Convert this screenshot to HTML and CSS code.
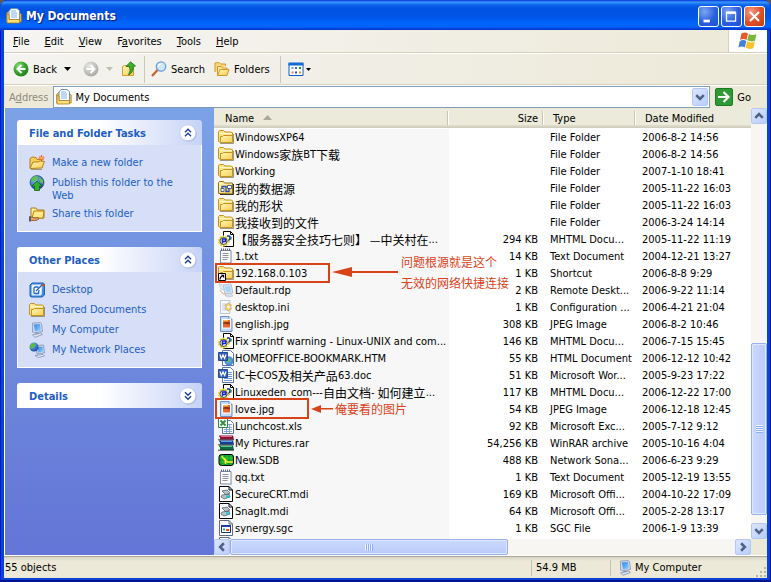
FILE: index.html
```html
<!DOCTYPE html>
<html lang="en">
<head>
<meta charset="utf-8">
<title>My Documents</title>
<link rel="stylesheet" href="styles.css">
</head>
<body>
<svg class="defs" aria-hidden="true">
  <defs>
    <linearGradient id="gFolder" x1="0" y1="0" x2="1" y2="1"><stop offset="0" stop-color="#fffab8"/><stop offset="1" stop-color="#f7ca50"/></linearGradient>
    <linearGradient id="gScreen" x1="0" y1="0" x2="1" y2="1"><stop offset="0" stop-color="#2f7fe0"/><stop offset="1" stop-color="#9ad8ff"/></linearGradient>
    <radialGradient id="gGreen" cx=".35" cy=".3" r=".8"><stop offset="0" stop-color="#8fdc7d"/><stop offset=".5" stop-color="#3aa62c"/><stop offset="1" stop-color="#1c7d18"/></radialGradient>
    <radialGradient id="gGray" cx=".35" cy=".3" r=".8"><stop offset="0" stop-color="#e6e6e2"/><stop offset="1" stop-color="#a5a5a0"/></radialGradient>
    <radialGradient id="gGlobe" cx=".35" cy=".3" r=".8"><stop offset="0" stop-color="#7db8ff"/><stop offset="1" stop-color="#123f9c"/></radialGradient>
  </defs>
  <symbol id="folder" viewBox="0 0 16 16">
    <path d="M2 14.500h13.500V5" fill="none" stroke="#77705c" opacity=".7"/>
    <path d="M.5 12.500V2.500L1.500 1.500h4l1.500 1.500H13.500l1 1v9h-13z" fill="#fbe48a" stroke="#c6941c"/>
    <path d="M1.500 4.500h12" stroke="#fff8cc"/>
    <path d="M2.500 13.500V7.500h2l1-1h9v7z" fill="url(#gFolder)" stroke="#c6941c"/>
  </symbol>
  <symbol id="openfolder" viewBox="0 0 16 16">
    <path d="M1 13V3.500L3 2l4 .5 1 2 5-.5v3" fill="#f5cf5a" stroke="#b98014"/>
    <path d="M1 13.500L4 7h5l2-1 4.500.5L13 13z" fill="url(#gFolder)" stroke="#b98014"/>
    <path d="M2 14.500h11" stroke="#7d6a3a" opacity=".6"/>
  </symbol>
  <symbol id="newfolder" viewBox="0 0 16 16">
    <use href="#openfolder"/>
    <path d="M12.500 0v6M9.500 3h6M10.500 1l4 4M14.500 1l-4 4" stroke="#ee5a24"/><circle cx="12.500" cy="3" r="1.300" fill="#ffb347"/>
  </symbol>
  <symbol id="sharefolder" viewBox="0 0 16 16">
    <path d="M2 11V2h5l1.500 2H15v8H2z" fill="url(#gFolder)" stroke="#a97a17"/>
    <path d="M5 5h10l-1 7H3z" fill="#ffe98a" stroke="#b98014"/>
    <path d="M0 11h3l3 1 3-.5 1 1.500-3 1.500H0z" fill="#e9a368" stroke="#7a4416" stroke-width=".7"/><path d="M0 10.500h2v5H0z" fill="#4d5a78"/>
  </symbol>
  <symbol id="publish" viewBox="0 0 16 16">
    <circle cx="8" cy="7.500" r="7" fill="url(#gGlobe)" stroke="#1d3c7c" stroke-width=".6"/>
    <path d="M3 3l3-2 3 .5-1 3-3 2H2zM10 2l4 3v4l-3-2z" fill="#5fc448"/>
    <path d="M8 6l5 5h-2.500v4.500h-5V11H3z" fill="#35b02a" stroke="#0b6a10" stroke-width=".8"/>
  </symbol>
  <symbol id="deskicon" viewBox="0 0 16 16">
    <path d="M1 3l2-2h11l1.500 1v11L13 15H2l-1-1z" fill="#3d8fe4" stroke="#2460b4"/>
    <path d="M3 3h9l1 1-1 9H3z" fill="#fff" stroke="#d6e8fb"/>
    <path d="M9.500 5H6L5 6v5l1 .5h3.500L10 8M7 9l6-6" fill="none" stroke="#1f66c2" stroke-width="1.300"/><path d="M13 4l2.500-1.500" stroke="#e34a2a" stroke-width="2"/>
  </symbol>
  <symbol id="computer" viewBox="0 0 16 16">
    <path d="M3.500 1l8-.5 1 1 1 8-8 1.500-2-1z" fill="#c9d6ea" stroke="#8497b8" stroke-width=".8"/>
    <path d="M5 2.500l6-.5.8 6.500-5.800 1z" fill="url(#gScreen)"/>
    <path d="M6 11l3-.5.5 1.500-3 .5z" fill="#8fa3c3"/>
    <path d="M3.500 13l8.500-2 1.500 1.500L6 15.300z" fill="#dde6f2" stroke="#7287a8" stroke-width=".7"/>
  </symbol>
  <symbol id="network" viewBox="0 0 16 16">
    <path d="M7 3.500l7.500-.5 1 8-7.500 1z" fill="#c9d6ea" stroke="#7d92b5" stroke-width=".8"/><path d="M8.500 5l5-.3.7 5-5 .8z" fill="url(#gScreen)"/>
    <path d="M6 13.500l8-1 1.500 1.500-6 1.500z" fill="#e2eaf5" stroke="#7287a8" stroke-width=".7"/>
    <circle cx="5" cy="5" r="4.500" fill="url(#gGlobe)"/><path d="M2 2l3-1 2 1-2 3-2 2-2-1z" fill="#58bd3e"/>
  </symbol>
  <symbol id="mydocs" viewBox="0 0 16 16">
    <path d="M.8 14V5L3 3h9l3.200 3v8z" fill="#f6cc54" stroke="#a97a17" stroke-width=".8"/>
    <path d="M3 12V3l2-2.500h6l2.500 2V12z" fill="#fff" stroke="#6f8fc2"/>
    <path d="M5 3h5M5 5h6M5 7h6M5 9h6" stroke="#7fb0ea"/>
    <path d="M1 15V6l2 1v4.500h10.500V15z" fill="#fbdf7d" stroke="#a97a17" stroke-width=".8"/>
  </symbol>
  <symbol id="datasrc" viewBox="0 0 16 16">
    <path d="M.5 13.500v-11l1-1h4l1 1.500h8v11z" fill="url(#gFolder)" stroke="#8f701c"/><path d="M15.500 4v10.500H2" fill="none" stroke="#333"/>
    <path d="M4 10V6.500h4v5h3V8" fill="none" stroke="#2a4bb0" stroke-width="1.300"/><path d="M3 8.500h3v3H3zM9.500 5.500h4v3h-4z" fill="#fff" stroke="#27408f" stroke-width=".8"/>
  </symbol>
  <symbol id="shortcut" viewBox="0 0 16 16">
    <use href="#folder"/><path d="M.5 8.500h7v7h-7z" fill="#fff" stroke="#000"/><path d="M2 14.500c0-2 1-3 2-3.500" fill="none" stroke="#000" stroke-width="1.200"/><path d="M2.800 9.800h3.400v3.400z" fill="#000"/>
  </symbol>
  <symbol id="mht" viewBox="0 0 16 16">
    <path d="M5.500.5h7l3 3v12h-10z" fill="#fff" stroke="#000"/><path d="M12.500.5v3h3" fill="none" stroke="#000"/>
    <path d="M9 5h2l1 1v2l-1.500 1v2" fill="none" stroke="#14319c" stroke-width="1.600"/><path d="M12 4.500l2 2-1 3z" fill="#2ca044"/>
    <circle cx="5.500" cy="10" r="4.500" fill="#fff" stroke="#e6cf1c" stroke-width="2" stroke-dasharray="2 .8"/><circle cx="5.500" cy="10" r="3.500" fill="none" stroke="#141414" stroke-width=".7"/>
    <path d="M4.500 12.500V8h3v2.500H5" fill="none" stroke="#1327d0" stroke-width="1.600"/>
  </symbol>
  <symbol id="txt" viewBox="0 0 16 16">
    <path d="M2.500 2.500h10.500v12.500H2.500z" fill="#fdfdfd" stroke="#7f8aa3"/><path d="M3 1.500h10" stroke="#5a6784" stroke-dasharray="1 1" stroke-width="2"/>
    <path d="M4.500 5.500h6M4.500 7.500h6M4.500 9.500h6M4.500 11.500h5" stroke="#8c93a8"/><path d="M13.500 4v11.500H4" fill="none" stroke="#b9bdc9"/>
  </symbol>
  <symbol id="rdp" viewBox="0 0 16 16">
    <path d="M5 3l8-1 2 9-8 1z" fill="#d4e2f2" stroke="#a7bad2" stroke-width=".8"/><path d="M7 4.500l5-.6 1.200 5.500-5 .8z" fill="#a9d6f5"/><path d="M7 13.500l7-1 1 1.500-5 1z" fill="#e3eaf3" stroke="#a8b6c9" stroke-width=".6"/>
    <path d="M1 2l4 1 1 5-3-1z" fill="#e8eef6" stroke="#a9bacf" stroke-width=".6"/><path d="M2 8l3 4h3" fill="none" stroke="#d1b66f"/>
  </symbol>
  <symbol id="ini" viewBox="0 0 16 16">
    <path d="M2.500 1.500H12v13H2.500z" fill="#fafbfd" stroke="#bcc5d6"/><path d="M4 5h5M4 7h4M4 9h4M4 11h6" stroke="#b7cbe6"/>
    <path d="M10.500 3.500l1 2 2 .5-1 2 1 2-2 .5-1 2-1.500-2-2-.5 1-2-1-2 2-.5z" fill="#f5cf7d" stroke="#d6a348" stroke-width=".7"/><circle cx="10.500" cy="8" r="1.200" fill="#fff"/>
  </symbol>
  <symbol id="jpg" viewBox="0 0 16 16">
    <path d="M2.500.5h8.500l3 3v12H2.500z" fill="#c5daf8" stroke="#6c8fc8"/><path d="M11 .5v3h3" fill="#fff" stroke="#6c8fc8"/>
    <path d="M4 3h9v9.500H4z" fill="#fff"/><path d="M5 4h7v7.500H5z" fill="#e2672b"/><path d="M4.500 7.500l3-2 4.500 1v2L9 8z" fill="#8f2f1a"/><path d="M5 4h5v1.500H5z" fill="#f7b84f"/>
  </symbol>
  <symbol id="htm" viewBox="0 0 16 16">
    <path d="M4.500.5h8l3 3v12h-11z" fill="#fff" stroke="#5b74a8"/><circle cx="11" cy="11" r="4.200" fill="#4c9adf" stroke="#2b5aa1" stroke-width=".6"/><path d="M8 10l3-2 2 2-3 3z" fill="#74c257"/>
    <path d="M.5 2.500h9v8h-9z" fill="#3263b8" stroke="#214a96"/><path d="M2 4.500l1.300 4L5 5l1.600 3.500L8 4.500" fill="none" stroke="#fff" stroke-width="1.200"/>
  </symbol>
  <symbol id="doc" viewBox="0 0 16 16">
    <path d="M4.500.5h8l3 3v12h-11z" fill="#fff" stroke="#5b74a8"/><path d="M10 5.500h4M10 7.500h4M10 9.500h4M6 11.500h8M6 13.500h8" stroke="#6f93d4"/>
    <path d="M.5 2.500h9v8h-9z" fill="#3263b8" stroke="#214a96"/><path d="M2 4.500l1.300 4L5 5l1.600 3.500L8 4.500" fill="none" stroke="#fff" stroke-width="1.200"/>
  </symbol>
  <symbol id="xls" viewBox="0 0 16 16">
    <path d="M4.500 2.500h8l3 3v10h-11z" fill="#fff" stroke="#5b74a8"/><path d="M10 6.500h4M6 9.500h8M6 11.500h8M6 13.500h8M8.500 8v7M11.500 6v9" stroke="#6f93d4" stroke-width=".8"/>
    <path d="M.5.500h9v9h-9z" fill="#fff" stroke="#2f8a3a"/><path d="M2.500 2.500l5 5M7.500 2.500l-5 5" stroke="#2f8a3a" stroke-width="1.800"/>
  </symbol>
  <symbol id="rar" viewBox="0 0 16 16">
    <path d="M1 .5h14l1 4H2z" fill="#8d1238"/><path d="M3 1.500h11" stroke="#e76f94"/><path d="M0 2h2v3H0z" fill="#eee"/>
    <path d="M1 5.500h14l1 4H2z" fill="#123f96"/><path d="M3 6.500h11" stroke="#5aa0ef"/><path d="M0 7h2v3H0z" fill="#eee"/>
    <path d="M1 10.500h14l1 4.500H2z" fill="#0c6a3e"/><path d="M3 11.500h11" stroke="#52c98c"/><path d="M0 12h2v3H0z" fill="#eee"/>
    <path d="M0 4.800h16M0 9.800h16M0 15.200h16" stroke="#1b1b1b" stroke-width=".8"/>
  </symbol>
  <symbol id="sdb" viewBox="0 0 16 16">
    <rect x="1" y="2.500" width="14.500" height="11" rx="2.500" fill="#0fa01e" stroke="#000"/><path d="M5 3v10M9 3v10M13 3v10M1.500 6h13M1.500 10h13" stroke="#4ad458" stroke-width=".6"/>
    <path d="M3.500 4l3.500 4 .5 4M6 6l3 4h6" fill="none" stroke="#f4ef35" stroke-width="1.400"/>
  </symbol>
  <symbol id="mdi" viewBox="0 0 16 16">
    <path d="M1.500.5h9.500l3.500 3.500v11.500h-13z" fill="#fff" stroke="#000"/><path d="M11 .5V4h3.500" fill="none" stroke="#000"/>
    <path d="M4 5l5-1 3 3-4 2zM4 9l7-1 1 3-6 2-3-2z" fill="#b8c2ca" stroke="#59646c" stroke-width=".8"/><path d="M8 9.500h4v2H8z" fill="#21c3d3"/>
  </symbol>
  <symbol id="sgc" viewBox="0 0 16 16">
    <path d="M1.500.5h9.500l3.500 3.500v11.500h-13z" fill="#fff" stroke="#5f6b80"/><path d="M11 .5V4h3.500" fill="none" stroke="#5f6b80"/>
    <path d="M3.500 5.500h9v7h-9z" fill="#fff" stroke="#1a2e70"/><path d="M3 6h10" stroke="#1b3fa6" stroke-width="2"/><path d="M5 8.500h2v2H5z" fill="#28a9a0"/><path d="M8 9h3v2H8z" fill="#d94d32"/>
  </symbol>
  <symbol id="chev" viewBox="0 0 8 8"><path d="M1 2.500l3 3 3-3" fill="none" stroke="#4d6185" stroke-width="2"/></symbol>
  <symbol id="dbl" viewBox="0 0 18 18">
    <circle cx="9.500" cy="9.500" r="8.200" fill="#a9b6de"/><circle cx="8.800" cy="8.800" r="8" fill="#fff" stroke="#bdc8e8" stroke-width=".7"/>
    <path d="M6 8.200l3-3 3 3M6 12.200l3-3 3 3" fill="none" stroke="#1c3e94" stroke-width="1.400"/>
  </symbol>
</svg>

<div class="window">
  <header class="titlebar">
    <svg class="ico"><use href="#mydocs"/></svg>
    <h1>My Documents</h1>
    <div class="caption">
      <button type="button" aria-label="Minimize"><svg viewBox="0 0 21 21"><path d="M5 14h7v3H5z" fill="#fff"/></svg></button>
      <button type="button" aria-label="Maximize"><svg viewBox="0 0 21 21"><path d="M5 6.500h10v9H5zM5 6h10" fill="none" stroke="#fff" stroke-width="1.400"/><path d="M4.500 5h11v2.500h-11z" fill="#fff"/></svg></button>
      <button type="button" class="close" aria-label="Close"><svg viewBox="0 0 21 21"><path d="M5.500 5.500l10 10M15.500 5.500l-10 10" stroke="#fff" stroke-width="2.200"/></svg></button>
    </div>
  </header>

  <div class="client">
    <div class="menurow">
      <nav class="menus">
        <button type="button"><u>F</u>ile</button>
        <button type="button"><u>E</u>dit</button>
        <button type="button"><u>V</u>iew</button>
        <button type="button">F<u>a</u>vorites</button>
        <button type="button"><u>T</u>ools</button>
        <button type="button"><u>H</u>elp</button>
      </nav>
      <div class="flag">
        <svg viewBox="0 0 20 18" role="img" aria-label="Windows">
          <path d="M3.500 1.500q3.500-2 6.500 0L8.500 8q-3-1.800-6.500 0z" fill="#e8592b"/>
          <path d="M10.800 2q3 1.700 7.700.3L17 8.800q-4 1.500-7.700-.5z" fill="#7ab938"/>
          <path d="M1.800 9q3.500-1.800 6.500 0L6.800 15.500q-3-1.800-6.500 0z" fill="#3f82d6"/>
          <path d="M9.100 9.300q3.500 1.900 7.700.5l-1.500 6.500q-4 1.500-7.700-.5z" fill="#f6c12b"/>
        </svg>
      </div>
    </div>

    <div class="toolbar">
      <button type="button" class="tool"><svg class="ico"><circle cx="8" cy="8" r="7.500" fill="url(#gGreen)"/><path d="M12.500 8H5M8.500 4L4.500 8l4 4" fill="none" stroke="#fff" stroke-width="2"/></svg>Back</button>
      <button type="button" class="drop" aria-label="Back history"><svg viewBox="0 0 7 4"><path d="M0 0h7L3.500 4z"/></svg></button>
      <button type="button" class="tool fwd" aria-label="Forward"><svg class="ico"><circle cx="8" cy="8" r="7.500" fill="url(#gGray)"/><path d="M3.500 8H11M7.500 4l4 4-4 4" fill="none" stroke="#fff" stroke-width="2"/></svg></button>
      <button type="button" class="drop dim" aria-label="Forward history"><svg viewBox="0 0 7 4"><path d="M0 0h7L3.500 4z"/></svg></button>
      <button type="button" class="tool up" aria-label="Up"><svg class="ico"><path d="M1.500 14.500V5.500l2-1h3l1 1.500h5v8.500z" fill="url(#gFolder)" stroke="#d3a02c"/><path d="M5 5.500L9.500.8 14.500 5l-2.300.3Q13 11 7.500 14q2.500-4.500 1-8.500z" fill="#3fb22d" stroke="#17701a" stroke-width=".8"/></svg></button>
      <span class="sep"></span>
      <button type="button" class="tool"><svg class="ico"><path d="M6.500 9L1 15" stroke="#c4622c" stroke-width="2.200"/><circle cx="10" cy="5.500" r="4.700" fill="#cfe8fc" stroke="#6f9cd8" stroke-width="1.300"/><path d="M7.500 5q.5-2 2.500-2" fill="none" stroke="#fff" stroke-width="1.200"/></svg>Search</button>
      <button type="button" class="tool folders"><svg class="ico"><path d="M1 11V2l4-.5 1.500 1.500h5v2" fill="#fbd97a" stroke="#d3962b"/><path d="M3.500 14V5.500h4l1 1.500H13v2" fill="#fce79a" stroke="#d3962b"/><path d="M3.500 14.500l2.500-6h9l-2 6z" fill="url(#gFolder)" stroke="#d3962b"/></svg>Folders</button>
      <span class="sep"></span>
      <button type="button" class="tool views" aria-label="Views"><svg class="ico"><path d="M1 2.500h14v12H1z" fill="#fff" stroke="#0a5cc8"/><path d="M.5 1.500h15v3H.5z" fill="#1369d6"/><path d="M3.500 6h2v2h-2z" fill="#8f8ed0"/><path d="M7 6h2v2H7z" fill="#2a74d8"/><path d="M11 6h2v2h-2z" fill="#1f9424"/><path d="M3.500 10.500h2v2h-2z" fill="#ea7b50"/><path d="M7 10.500h2v2H7z" fill="#1d4cac"/><path d="M11 10.500h2v2h-2z" fill="#d29a24"/></svg><svg class="tri" viewBox="0 0 5 3"><path d="M0 0h5L2.500 3z"/></svg></button>
    </div>

    <form class="addressbar">
      <label for="addr">A<u>d</u>dress</label>
      <div class="combo">
        <svg class="ico"><use href="#mydocs"/></svg>
        <input id="addr" type="text" value="My Documents">
        <button type="button" class="sbtn" aria-label="Show addresses"><svg><use href="#chev"/></svg></button>
      </div>
      <button type="button" class="go"><svg viewBox="0 0 18 18"><rect x=".5" y=".5" width="17" height="17" rx="1.500" fill="#2f9a35" stroke="#1c7a24"/><path d="M3 9h10M8.500 4l5 5-5 5" fill="none" stroke="#fff" stroke-width="2.200"/></svg>Go</button>
    </form>

    <main class="content">
      <aside class="tasks">
        <section>
          <header><h2>File and Folder Tasks</h2><button type="button" aria-label="Collapse File and Folder Tasks"><svg><use href="#dbl"/></svg></button></header>
          <ul>
            <li><a href="#"><svg class="ico"><use href="#newfolder"/></svg><span>Make a new folder</span></a></li>
            <li><a href="#"><svg class="ico"><use href="#publish"/></svg><span>Publish this folder to the Web</span></a></li>
            <li><a href="#"><svg class="ico"><use href="#sharefolder"/></svg><span>Share this folder</span></a></li>
          </ul>
        </section>
        <section>
          <header><h2>Other Places</h2><button type="button" aria-label="Collapse Other Places"><svg><use href="#dbl"/></svg></button></header>
          <ul>
            <li><a href="#"><svg class="ico"><use href="#deskicon"/></svg><span>Desktop</span></a></li>
            <li><a href="#"><svg class="ico"><use href="#folder"/></svg><span>Shared Documents</span></a></li>
            <li><a href="#"><svg class="ico"><use href="#computer"/></svg><span>My Computer</span></a></li>
            <li><a href="#"><svg class="ico"><use href="#network"/></svg><span>My Network Places</span></a></li>
          </ul>
        </section>
        <section>
          <header><h2>Details</h2><button type="button" aria-label="Expand Details"><svg viewBox="0 0 18 18"><circle cx="9.500" cy="9.500" r="8.200" fill="#a9b6de"/><circle cx="8.800" cy="8.800" r="8" fill="#fff" stroke="#bdc8e8" stroke-width=".7"/><path d="M6 5.200l3 3 3-3M6 9.200l3 3 3-3" fill="none" stroke="#1c3e94" stroke-width="1.400"/></svg></button></header>
        </section>
      </aside>

      <div class="pane">
        <div class="list">
          <table>
            <colgroup><col class="c-name"><col class="c-size"><col class="c-type"><col></colgroup>
            <thead><tr><th>Name<svg class="sort" viewBox="0 0 9 5"><path d="M0 5h9L4.500 0z"/></svg></th><th class="num">Size</th><th>Type</th><th>Date Modified</th></tr></thead>
            <tbody>
              <tr><td><svg class="ico"><use href="#folder"/></svg>WindowsXP64</td><td></td><td>File Folder</td><td>2006-8-2 14:56</td></tr>
              <tr><td><svg class="ico"><use href="#folder"/></svg>Windows<b>家族</b>BT<b>下载</b></td><td></td><td>File Folder</td><td>2006-8-2 14:56</td></tr>
              <tr><td><svg class="ico"><use href="#folder"/></svg>Working</td><td></td><td>File Folder</td><td>2007-1-10 18:41</td></tr>
              <tr><td><svg class="ico"><use href="#datasrc"/></svg><b>我的数据源</b></td><td></td><td>File Folder</td><td>2005-11-22 16:03</td></tr>
              <tr><td><svg class="ico"><use href="#folder"/></svg><b>我的形状</b></td><td></td><td>File Folder</td><td>2005-11-22 16:03</td></tr>
              <tr><td><svg class="ico"><use href="#folder"/></svg><b>我接收到的文件</b></td><td></td><td>File Folder</td><td>2006-3-24 14:14</td></tr>
              <tr><td><svg class="ico"><use href="#mht"/></svg><b>【服务器安全技巧七则】 —中关村在</b>...</td><td>294 KB</td><td>MHTML Docu...</td><td>2005-11-22 11:19</td></tr>
              <tr><td><svg class="ico"><use href="#txt"/></svg>1.txt</td><td>14 KB</td><td>Text Document</td><td>2004-12-21 13:27</td></tr>
              <tr><td><svg class="ico"><use href="#shortcut"/></svg>192.168.0.103</td><td>1 KB</td><td>Shortcut</td><td>2006-8-8 9:29</td></tr>
              <tr><td><svg class="ico"><use href="#rdp"/></svg>Default.rdp</td><td>2 KB</td><td>Remote Deskt...</td><td>2006-9-22 11:14</td></tr>
              <tr><td><svg class="ico"><use href="#ini"/></svg>desktop.ini</td><td>1 KB</td><td>Configuration ...</td><td>2006-4-21 21:04</td></tr>
              <tr><td><svg class="ico"><use href="#jpg"/></svg>english.jpg</td><td>308 KB</td><td>JPEG Image</td><td>2006-8-2 10:46</td></tr>
              <tr><td><svg class="ico"><use href="#mht"/></svg>Fix sprintf warning - Linux-UNIX and com...</td><td>146 KB</td><td>MHTML Docu...</td><td>2006-7-15 15:45</td></tr>
              <tr><td><svg class="ico"><use href="#htm"/></svg>HOMEOFFICE-BOOKMARK.HTM</td><td>55 KB</td><td>HTML Document</td><td>2006-12-12 10:42</td></tr>
              <tr><td><svg class="ico"><use href="#doc"/></svg>IC<b>卡</b>COS<b>及相关产品</b>63.doc</td><td>51 KB</td><td>Microsoft Wor...</td><td>2005-9-23 17:22</td></tr>
              <tr><td><svg class="ico"><use href="#mht"/></svg>Linuxeden_com---<b>自由文档</b>- <b>如何建立</b>...</td><td>117 KB</td><td>MHTML Docu...</td><td>2006-12-22 17:00</td></tr>
              <tr><td><svg class="ico"><use href="#jpg"/></svg>love.jpg</td><td>54 KB</td><td>JPEG Image</td><td>2006-12-18 12:45</td></tr>
              <tr><td><svg class="ico"><use href="#xls"/></svg>Lunchcost.xls</td><td>92 KB</td><td>Microsoft Exc...</td><td>2005-7-12 9:12</td></tr>
              <tr><td><svg class="ico"><use href="#rar"/></svg>My Pictures.rar</td><td>54,256 KB</td><td>WinRAR archive</td><td>2005-10-16 4:04</td></tr>
              <tr><td><svg class="ico"><use href="#sdb"/></svg>New.SDB</td><td>488 KB</td><td>Network Sona...</td><td>2006-6-23 9:29</td></tr>
              <tr><td><svg class="ico"><use href="#txt"/></svg>qq.txt</td><td>1 KB</td><td>Text Document</td><td>2005-12-19 13:55</td></tr>
              <tr><td><svg class="ico"><use href="#mdi"/></svg>SecureCRT.mdi</td><td>169 KB</td><td>Microsoft Offi...</td><td>2004-10-22 17:09</td></tr>
              <tr><td><svg class="ico"><use href="#mdi"/></svg>SnagIt.mdi</td><td>64 KB</td><td>Microsoft Offi...</td><td>2005-2-28 13:17</td></tr>
              <tr><td><svg class="ico"><use href="#sgc"/></svg>synergy.sgc</td><td>1 KB</td><td>SGC File</td><td>2006-1-9 13:39</td></tr>
              <tr><td><svg class="ico"><use href="#sgc"/></svg></td><td></td><td></td><td></td></tr>
            </tbody>
          </table>
          <div class="mark mark-link"></div>
          <svg class="arrow arrow-link" viewBox="0 0 66 10"><path d="M0 5L20 0v10zM18 4h48v2H18z" fill="#d9431a"/></svg>
          <p class="note note-link">问题根源就是这个<br>无效的网络快捷连接</p>
          <div class="mark mark-love"></div>
          <svg class="arrow arrow-love" viewBox="0 0 22 8"><path d="M0 4l10-4v8zM9 3h13v1.500H9z" fill="#d9431a"/></svg>
          <p class="note note-love">俺要看的图片</p>
        </div>
        <div class="vbar">
          <button type="button" class="sbtn" aria-label="Scroll up"><svg viewBox="0 0 8 8"><path d="M1 5.500l3-3 3 3" fill="none" stroke="#4d6185" stroke-width="2"/></svg></button>
          <div class="vtrack"><div class="thumb"><i></i></div></div>
          <button type="button" class="sbtn" aria-label="Scroll down"><svg><use href="#chev"/></svg></button>
        </div>
        <div class="hbar">
          <button type="button" class="sbtn" aria-label="Scroll left"><svg viewBox="0 0 8 8"><path d="M5.500 1l-3 3 3 3" fill="none" stroke="#4d6185" stroke-width="2"/></svg></button>
          <div class="htrack"><div class="thumb"><i></i></div></div>
          <button type="button" class="sbtn" aria-label="Scroll right"><svg viewBox="0 0 8 8"><path d="M2.500 1l3 3-3 3" fill="none" stroke="#4d6185" stroke-width="2"/></svg></button>
        </div>
        <div class="corner"></div>
      </div>
    </main>

    <footer class="status">
      <span class="grow">55 objects</span>
      <span class="size">54.9 MB</span>
      <span class="zone"><svg class="ico"><use href="#computer"/></svg>My Computer</span>
      <svg class="grip" viewBox="0 0 12 12"><path d="M9 1h2v2H9zM9 5h2v2H9zM9 9h2v2H9zM5 5h2v2H5zM5 9h2v2H5zM1 9h2v2H1z" fill="#b8b4a2"/></svg>
    </footer>
  </div>
</div>
</body>
</html>
```
FILE: styles.css
```css
* { box-sizing: border-box; }

body {
  margin: 0;
  background: #5b5b5b;
  font: 11px/13px "DejaVu Sans Condensed", "Noto Sans CJK SC", sans-serif;
  color: #000;
}

button, input {
  margin: 0;
  padding: 0;
  border: 0;
  background: none;
  font: inherit;
  color: inherit;
}

h1, h2, p, ul { margin: 0; padding: 0; }

.defs { position: absolute; width: 0; height: 0; }

.ico { width: 16px; height: 16px; flex: none; }

.window {
  display: flex;
  flex-direction: column;
  height: 100vh;
  padding: 0 4px 4px;
  border-radius: 8px 8px 0 0;
  background: #0842d8;
  box-shadow: inset 1px 0 #0019cf, inset -1px 0 #00138c, inset 0 -2px #00138c;
  overflow: hidden;
}

.titlebar {
  display: flex;
  align-items: center;
  gap: 4px;
  flex: none;
  height: 30px;
  margin: 0 -4px;
  padding: 2px 6px 0;
  background: linear-gradient(#0831d9 0, #3a93ff 2px, #2a8afc 3px, #0c62ea 5px, #0053e1 9px, #0055e5 16px, #0066fe 24px, #0061f8 27px, #003dd7 29px, #0034c4);
}

.titlebar h1 {
  flex: 1;
  font: bold 12px/16px "DejaVu Sans Condensed", sans-serif;
  color: #fff;
  text-shadow: 1px 1px 1px #0a1883;
}

.caption { display: flex; gap: 2px; }

.caption button {
  width: 21px;
  height: 21px;
  border: 1px solid #fff;
  border-radius: 3px;
  background: radial-gradient(circle at 30% 25%, #7da6f2, #2a5ee0 55%, #1c4fd8);
}

.caption .close { background: radial-gradient(circle at 30% 25%, #f09c80, #dc4f27 55%, #c63a12); }

.caption svg { display: block; width: 19px; height: 19px; }

.client {
  display: flex;
  flex-direction: column;
  flex: 1;
  min-height: 0;
  background: #ece9d8;
}

.menurow {
  display: flex;
  flex: none;
  height: 23px;
  border-bottom: 1px solid #d6d0bb;
  background: linear-gradient(90deg, #f6f5f3, #ece9d8);
}

.menus { display: flex; align-items: center; flex: 1; gap: 15px; padding-left: 9px; }

.flag {
  display: flex;
  align-items: center;
  justify-content: center;
  width: 39px;
  border-left: 1px solid #d6d0bb;
  background: #fff;
}

.flag svg { width: 20px; height: 18px; }

.toolbar {
  display: flex;
  align-items: center;
  flex: none;
  height: 32px;
  padding-left: 9px;
  border-top: 1px solid #fff;
  border-bottom: 1px solid #d6d0bb;
  background: linear-gradient(90deg, #f4f3f0, #ece9d8);
}

.tool { display: flex; align-items: center; gap: 4px; }
.drop { padding-left: 7px; }
.drop svg { display: block; width: 7px; height: 4px; }
.dim { fill: #c2bfb2; }
.fwd { padding-left: 12px; }
.up { padding-left: 8px; }
.folders { padding-left: 9px; }
.views { gap: 2px; padding-left: 1px; }
.tri { width: 5px; height: 3px; }

.sep { width: 1px; height: 27px; margin: 0 6px 0 7px; background: #cdc8b4; }
.folders + .sep { margin-left: 10px; }

.addressbar {
  display: flex;
  align-items: center;
  flex: none;
  gap: 5px;
  height: 23px;
  padding: 0 16px 0 5px;
  border-top: 1px solid #fff;
}

.addressbar label { color: #8c8a80; }

.combo {
  display: flex;
  align-items: center;
  flex: 1;
  gap: 2px;
  height: 22px;
  padding: 0 1px 0 2px;
  border: 1px solid #7f9db9;
  background: #fff;
}

.combo input { flex: 1; min-width: 0; padding-left: 1px; outline: 0; }
.combo .sbtn { height: 18px; }

.go { display: flex; align-items: center; gap: 4px; }
.go svg { width: 18px; height: 18px; }

.sbtn {
  display: flex;
  align-items: center;
  justify-content: center;
  flex: none;
  width: 16px;
  height: 16px;
  border: 1px solid #b4c7f3;
  border-radius: 2px;
  background: linear-gradient(135deg, #dbe6ff, #b9cdfb);
}

.sbtn svg { width: 10px; height: 10px; }

.content {
  display: flex;
  flex: 1;
  min-height: 0;
  border-left: 1px solid #fff;
  border-bottom: 1px solid #fff;
}

.tasks {
  display: flex;
  flex-direction: column;
  gap: 15px;
  flex: none;
  width: 209px;
  padding: 12px;
  background: linear-gradient(#7ba2e7, #6375d6);
}

.tasks header {
  display: flex;
  align-items: center;
  justify-content: space-between;
  height: 25px;
  padding: 1px 5px 0 12px;
  border-radius: 3px 3px 0 0;
  background: linear-gradient(90deg, #fff 45%, #c6d3f7);
}

.tasks h2 { font-size: 11px; line-height: 13px; color: #215dc6; }
.tasks header svg { display: block; width: 18px; height: 18px; }

.tasks ul {
  display: flex;
  flex-direction: column;
  gap: 4px;
  padding: 10px 11px 9px;
  border: 1px solid #fff;
  border-top: 0;
  background: #d6dff7;
  list-style: none;
}

.tasks a { display: flex; gap: 7px; color: #215dc6; text-decoration: none; }
.tasks a span { padding-top: 1px; }

.pane {
  display: grid;
  flex: 1;
  min-width: 0;
  grid-template: minmax(0, 1fr) 16px / minmax(0, 1fr) 16px;
}

.list { position: relative; overflow: hidden; background: #fff; }

table { width: 100%; border-collapse: collapse; table-layout: fixed; }
.c-name { width: 235px; }
.c-size { width: 95px; }
.c-type { width: 92px; }

th {
  height: 21px;
  padding: 0 6px 1px 9px;
  background: linear-gradient(#ebeadb 17px, #e2decd 17px, #d6d2c2 19px, #cbc7b8 20px, #fff 20px);
  font-weight: normal;
  text-align: left;
}

th:first-child { padding-left: 11px; }
th.num { text-align: right; }

th:not(:last-child) {
  background: linear-gradient(#c7c5b2, #c7c5b2) right 1px top 3px / 1px 14px no-repeat, linear-gradient(#fff, #fff) right top 3px / 1px 14px no-repeat, linear-gradient(#ebeadb 17px, #e2decd 17px, #d6d2c2 19px, #cbc7b8 20px, #fff 20px);
}

.sort { width: 9px; height: 5px; margin-left: 9px; vertical-align: 2px; fill: #aca899; }

td { height: 17px; padding: 0 0 0 6px; line-height: 17px; white-space: nowrap; }
td:first-child { padding: 0 0 0 4px; background: #f7f7f7; }
td:nth-child(2) { padding: 0 6px 0 0; text-align: right; }
td .ico { display: inline-block; margin-right: 1px; vertical-align: top; }
td b { font: 12px/17px "Noto Sans CJK SC", sans-serif; vertical-align: top; }

.mark { position: absolute; border: 2px solid #d9431a; }
.mark-link { left: 1px; top: 155px; width: 115px; height: 20px; }
.mark-love { left: 1px; top: 290px; width: 94px; height: 21px; }

.arrow { position: absolute; }
.arrow-link { left: 118px; top: 159px; width: 66px; height: 10px; }
.arrow-love { left: 97px; top: 297px; width: 22px; height: 8px; }

.note { position: absolute; color: #d9431a; white-space: nowrap; font: 12px/21px "Noto Sans CJK SC", sans-serif; }
.note-link { left: 187px; top: 143px; }
.note-love { left: 121px; top: 290px; }

.vbar { display: flex; flex-direction: column; background: #f7f6f2; }
.hbar { display: flex; background: #f7f6f2; }

.vtrack { display: flex; flex-direction: column; flex: 1; padding-bottom: 8px; justify-content: flex-end; }
.htrack { display: flex; flex: 1; }

.thumb {
  display: flex;
  align-items: center;
  justify-content: center;
  border: 1px solid #98b0e8;
  border-radius: 2px;
  background: linear-gradient(90deg, #cbd9ff, #b9cbf8);
  box-shadow: inset 0 0 0 1px #dfe8ff;
}

.vtrack .thumb { height: 44%; }
.htrack .thumb { width: 55%; background: linear-gradient(#cbd9ff, #b9cbf8); }
.vtrack i { width: 7px; height: 8px; background: repeating-linear-gradient(#eef4fe 0 1px, #8cb0f8 1px 2px); }
.htrack i { width: 8px; height: 7px; background: repeating-linear-gradient(90deg, #eef4fe 0 1px, #8cb0f8 1px 2px); }

.corner { background: #ece9d8; }

.status {
  display: flex;
  align-items: center;
  flex: none;
  height: 22px;
  border-top: 1px solid #aca899;
  background: linear-gradient(#d8d4c4, #ece9d8 4px);
}

.status span { display: flex; align-items: center; height: 16px; padding-left: 4px; }
.status .grow { flex: 1; padding-left: 1px; }
.status .size { width: 79px; border-left: 1px solid #c5c2b2; }
.status .zone { gap: 2px; width: 145px; padding-left: 6px; border-left: 1px solid #c5c2b2; }
.grip { width: 12px; height: 12px; align-self: flex-end; }
```
